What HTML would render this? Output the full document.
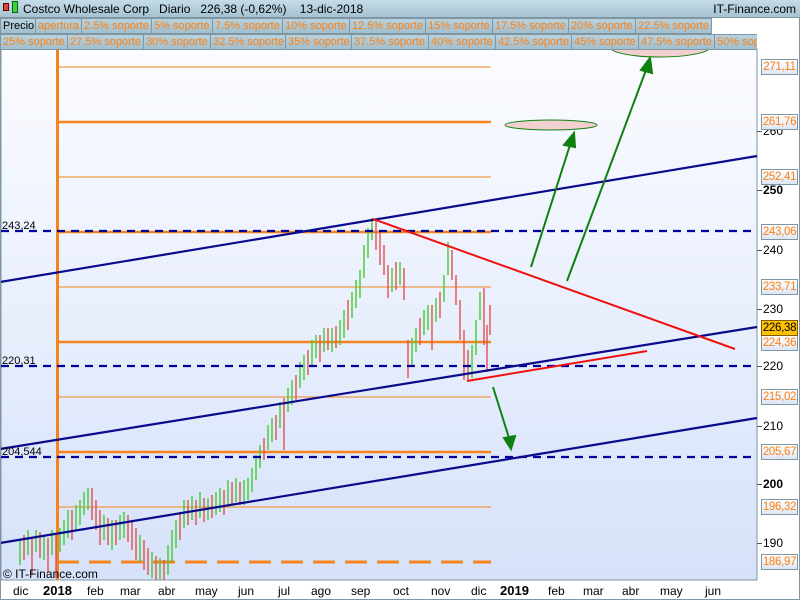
<!DOCTYPE html>
<html><head><meta charset="utf-8"><style>
*{margin:0;padding:0;box-sizing:border-box}
body{width:800px;height:600px;overflow:hidden;background:#fff;font-family:"Liberation Sans",sans-serif;position:relative}
#frame{position:absolute;left:0;top:0;width:800px;height:600px;border:1px solid #7f96a4}
#hdr{position:absolute;left:0;top:0;width:800px;height:18px;background:linear-gradient(#c4dce8,#a6c2d0);border-bottom:1px solid #7f96a4;font-size:12px;line-height:18px;color:#000}
.row{position:absolute;left:0;height:16px;font-size:11px;line-height:15px;color:#ff7f0f;white-space:nowrap;overflow:hidden}
.row span{position:absolute;top:0;height:16px;background:linear-gradient(#b8d2de,#a2bfcd);border:1px solid #7f96a4;padding-left:2px;overflow:hidden}
.ax{position:absolute;font-size:12px;color:#000}
.bx{position:absolute;left:761px;width:37px;height:16px;border:1px solid #7f96a4;background:linear-gradient(#fff,#dde6f4);color:#ff7f0f;font-size:11.5px;line-height:14px;text-align:center;letter-spacing:-0.3px}
.tk{position:absolute;left:757px;width:5px;height:1px;background:#555}
.bt{position:absolute;top:584px;font-size:12px;color:#000}
</style></head><body>
<svg width="800" height="600" style="position:absolute;left:0;top:0">
<defs><linearGradient id="g" x1="0" y1="0" x2="0" y2="1"><stop offset="0" stop-color="#fbfcff"/><stop offset="1" stop-color="#d6e2fa"/></linearGradient></defs>
<rect x="1" y="49" width="756" height="531" fill="url(#g)" stroke="#7f96a4"/>
<g stroke="#f5841f">
<line x1="57" y1="67" x2="491" y2="67" stroke-width="1"/>
<line x1="57" y1="122" x2="491" y2="122" stroke-width="2.5"/>
<line x1="57" y1="177" x2="491" y2="177" stroke-width="1"/>
<line x1="57" y1="232" x2="491" y2="232" stroke-width="2.5"/>
<line x1="57" y1="287" x2="491" y2="287" stroke-width="1"/>
<line x1="57" y1="342" x2="491" y2="342" stroke-width="2.5"/>
<line x1="57" y1="397" x2="491" y2="397" stroke-width="1"/>
<line x1="57" y1="452" x2="491" y2="452" stroke-width="2.5"/>
<line x1="57" y1="507" x2="491" y2="507" stroke-width="1"/>
<line x1="57" y1="562" x2="491" y2="562" stroke-width="3" stroke-dasharray="22,10"/>
<line x1="57.5" y1="49" x2="57.5" y2="580" stroke-width="3"/>
</g>
<path fill="none" stroke="#40cc30" stroke-width="1.4" d="M20 540V565M28 530V555M36 530V552M44 535V560M52 530V555M60 528V552M64 520V545M68 510V538M76 505V530M80 500V525M84 492V515M88 488V510M104 515V540M112 520V550M120 515V540M124 512V538M140 535V562M152 552V578M160 558V580M168 545V575M172 530V562M176 520V548M184 500V528M192 496V520M200 492V518M208 498V520M216 492V515M220 488V512M228 480V505M236 478V502M244 480V505M248 478V500M252 468V492M256 455V480M260 445V468M268 425V450M272 418V442M280 402V428M288 388V412M292 380V405M300 362V388M304 355V380M312 340V365M316 335V358M324 328V352M332 328V352M340 320V345M344 310V338M352 292V318M356 280V308M360 270V298M364 245V278M368 228V258M372 218V240M392 268V292M400 262V285M412 338V365M416 328V352M424 310V335M428 305V330M436 298V322M444 275V302M448 242V275M472 345V378M476 320V355M480 292V320"/>
<path fill="none" stroke="#e05050" stroke-width="1.4" d="M24 535V560M32 538V575M40 532V558M48 538V572M56 535V578M72 510V540M92 488V520M96 500V530M100 510V545M108 518V545M116 520V545M128 515V542M132 520V550M136 528V560M144 540V570M148 548V575M156 556V580M164 560V580M180 512V540M188 500V525M196 500V525M204 498V522M212 495V518M224 490V515M232 482V505M240 482V505M264 438V460M276 415V440M284 398V450M296 375V400M308 350V375M320 335V362M328 328V350M336 326V348M348 300V330M376 220V250M380 232V265M384 245V275M388 265V298M396 262V290M404 268V300M408 340V378M420 318V345M432 305V350M440 292V318M452 250V280M456 275V305M460 300V340M464 330V380M468 350V380M484 288V345M487 325V372M490 305V335"/>
<g stroke="#000099" stroke-width="2.2" stroke-dasharray="8,6">
<line x1="1" y1="231" x2="757" y2="231"/>
<line x1="1" y1="366" x2="757" y2="366"/>
<line x1="1" y1="457" x2="757" y2="457"/>
</g>
<g stroke="#0a0a8c" stroke-width="2.2">
<line x1="0" y1="282" x2="757" y2="156"/>
<line x1="0" y1="449" x2="757" y2="327"/>
<line x1="0" y1="543" x2="757" y2="418"/>
</g>
<g stroke="#f01010" stroke-width="2">
<line x1="373" y1="219" x2="735" y2="349"/>
<line x1="467" y1="381" x2="647" y2="351"/>
</g>
<g stroke="#108010" stroke-width="2" fill="#108010">
<line x1="531" y1="267" x2="570" y2="145"/><polygon points="574,133 564,145 575,147"/>
<line x1="567" y1="281" x2="646" y2="70"/><polygon points="650,58 641,70 652,73"/>
<line x1="493" y1="387" x2="509" y2="438"/><polygon points="511,449 504,438 515,436"/>
</g>
<ellipse cx="551" cy="125" rx="46" ry="5" fill="#f2d0d0" stroke="#108010"/>
<ellipse cx="660" cy="47" rx="50" ry="10" fill="#f2d0d0" stroke="#108010"/>
<text x="2" y="229" font-size="11" font-family="Liberation Sans">243,24</text>
<text x="2" y="364" font-size="11" font-family="Liberation Sans">220,31</text>
<text x="2" y="455" font-size="11" font-family="Liberation Sans">204,544</text>
<text x="3" y="578" font-size="12" font-family="Liberation Sans">© IT-Finance.com</text>
</svg>
<div id="frame"></div>
<div id="hdr"><span style="position:absolute;left:3px;top:3px;width:6px;height:8px;background:#e04040;border:1px solid #600"></span><span style="position:absolute;left:12px;top:1px;width:6px;height:12px;background:#40d040;border:1px solid #060"></span><span style="position:absolute;left:23px">Costco Wholesale Corp&nbsp;&nbsp;&nbsp;Diario&nbsp;&nbsp;&nbsp;226,38 (-0,62%)&nbsp;&nbsp;&nbsp;&nbsp;13-dic-2018</span><span style="position:absolute;right:4px">IT-Finance.com</span></div>
<div class="row" style="top:18px;width:712px">
<span style="left:0;width:36px;color:#000">Precio</span><span style="left:35px;width:47px">apertura</span><span style="left:81px;width:71px">2.5% soporte</span><span style="left:151px;width:62px">5% soporte</span><span style="left:212px;width:71px">7.5% soporte</span><span style="left:282px;width:68px">10% soporte</span><span style="left:349px;width:77px">12.5% soporte</span><span style="left:425px;width:68px">15% soporte</span><span style="left:492px;width:77px">17.5% soporte</span><span style="left:568px;width:68px">20% soporte</span><span style="left:635px;width:77px">22.5% soporte</span></div>
<div class="row" style="top:34px;width:757px">
<span style="left:0;width:68px">25% soporte</span><span style="left:67px;width:77px">27.5% soporte</span><span style="left:143px;width:68px">30% soporte</span><span style="left:210px;width:76px">32.5% soporte</span><span style="left:285px;width:67px">35% soporte</span><span style="left:351px;width:78px">37.5% soporte</span><span style="left:428px;width:68px">40% soporte</span><span style="left:495px;width:77px">42.5% soporte</span><span style="left:571px;width:68px">45% soporte</span><span style="left:638px;width:77px">47.5% soporte</span><span style="left:714px;width:60px">50% soporte</span></div>
<div class="tk" style="top:131px"></div><div class="ax" style="left:763px;top:124px">260</div>
<div class="tk" style="top:190px"></div><div class="ax" style="left:763px;top:183px;font-weight:bold">250</div>
<div class="tk" style="top:250px"></div><div class="ax" style="left:763px;top:243px">240</div>
<div class="tk" style="top:309px"></div><div class="ax" style="left:763px;top:302px">230</div>
<div class="tk" style="top:366px"></div><div class="ax" style="left:763px;top:359px">220</div>
<div class="tk" style="top:426px"></div><div class="ax" style="left:763px;top:419px">210</div>
<div class="tk" style="top:484px"></div><div class="ax" style="left:763px;top:477px;font-weight:bold">200</div>
<div class="tk" style="top:543px"></div><div class="ax" style="left:763px;top:536px">190</div>
<div class="bx" style="top:59px">271,11</div>
<div class="bx" style="top:114px">261,76</div>
<div class="bx" style="top:169px">252,41</div>
<div class="bx" style="top:224px">243,06</div>
<div class="bx" style="top:279px">233,71</div>
<div class="bx" style="top:335px">224,36</div>
<div class="bx" style="top:389px">215,02</div>
<div class="bx" style="top:444px">205,67</div>
<div class="bx" style="top:499px">196,32</div>
<div class="bx" style="top:554px">186,97</div>
<div class="bx" style="top:320px;background:#ffc000;color:#000;border-color:#7f6000">226,38</div>
<div class="bt" style="left:13px">dic</div>
<div class="bt" style="left:43px;font-weight:bold;font-size:13px;top:583px">2018</div>
<div class="bt" style="left:87px">feb</div>
<div class="bt" style="left:120px">mar</div>
<div class="bt" style="left:158px">abr</div>
<div class="bt" style="left:195px">may</div>
<div class="bt" style="left:238px">jun</div>
<div class="bt" style="left:278px">jul</div>
<div class="bt" style="left:311px">ago</div>
<div class="bt" style="left:351px">sep</div>
<div class="bt" style="left:393px">oct</div>
<div class="bt" style="left:431px">nov</div>
<div class="bt" style="left:471px">dic</div>
<div class="bt" style="left:500px;font-weight:bold;font-size:13px;top:583px">2019</div>
<div class="bt" style="left:548px">feb</div>
<div class="bt" style="left:583px">mar</div>
<div class="bt" style="left:622px">abr</div>
<div class="bt" style="left:660px">may</div>
<div class="bt" style="left:705px">jun</div>
</body></html>
